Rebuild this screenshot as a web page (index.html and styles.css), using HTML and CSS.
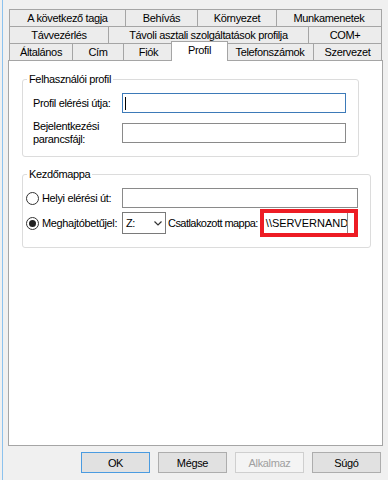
FILE: index.html
```html
<!DOCTYPE html>
<html lang="hu">
<head>
    <meta charset="UTF-8">
    <meta name="viewport" content="width=device-width, initial-scale=1.0">
    <title>Felhasználó tulajdonságai</title>
    <link rel="stylesheet" href="styles.css">
</head>
<body>
    <div class="window">
        <div class="tabs">
            <div class="tab-row row-1">
                <div class="tab">A következő tagja</div>
                <div class="tab">Behívás</div>
                <div class="tab">Környezet</div>
                <div class="tab">Munkamenetek</div>
            </div>
            <div class="tab-row row-2">
                <div class="tab">Távvezérlés</div>
                <div class="tab">Távoli asztali szolgáltatások profilja</div>
                <div class="tab">COM+</div>
            </div>
            <div class="tab-row row-3">
                <div class="tab">Általános</div>
                <div class="tab">Cím</div>
                <div class="tab">Fiók</div>
                <div class="tab active">Profil</div>
                <div class="tab">Telefonszámok</div>
                <div class="tab">Szervezet</div>
            </div>
        </div>

        <div class="page">
            <fieldset class="group">
                <legend>Felhasználói profil</legend>
                <div class="form-grid">
                    <label>Profil elérési útja:</label>
                    <div class="field focused"><span class="caret"></span></div>
                    <label>Bejelentkezési parancsfájl:</label>
                    <div class="field"></div>
                </div>
            </fieldset>

            <fieldset class="group">
                <legend>Kezdőmappa</legend>
                <div class="line">
                    <span class="option"><span class="radio"></span>Helyi elérési út:</span>
                    <div class="field wide"></div>
                </div>
                <div class="line">
                    <span class="option"><span class="radio checked"></span>Meghajtóbetűjel:</span>
                    <div class="combo">
                        <span>Z:</span>
                        <svg width="8" height="5" viewBox="0 0 8 5"><polyline points="0.5,0.5 4,4 7.5,0.5" fill="none" stroke="#333" stroke-width="1.2"/></svg>
                    </div>
                    <span class="inline-label">Csatlakozott mappa:</span>
                    <div class="marked"><div class="field path">\\SERVERNAND</div></div>
                </div>
            </fieldset>
        </div>

        <div class="buttons">
            <button class="btn default">OK</button>
            <button class="btn">Mégse</button>
            <button class="btn disabled">Alkalmaz</button>
            <button class="btn">Súgó</button>
        </div>
    </div>
</body>
</html>
```

FILE: styles.css
```css
body {
    margin: 0;
    background-color: #f0f0f0;
    font-family: "Liberation Sans", Arial, sans-serif;
    font-size: 11px;
    letter-spacing: -0.35px;
    color: #000;
}

.window {
    margin-left: 2px;
    border-left: 1px solid #8cc2ee;
    height: 480px;
    box-sizing: border-box;
    padding: 9px 5px 0 5px;
}

/* tab strip */
.tabs {
    margin: 0 1px;
}

.tab-row {
    display: grid;
    height: 17px;
}

.row-1 {
    grid-template-columns: 116px 72px 79px 1fr;
}

.row-2 {
    grid-template-columns: 99px 200px 1fr;
}

.row-3 {
    grid-template-columns: 63px 51px 50px 53px 87px 1fr;
}

.tab {
    border-top: 1px solid #a5a5a5;
    border-left: 1px solid #a5a5a5;
    background-color: #ececec;
    text-align: center;
    line-height: 16px;
    white-space: nowrap;
}

.tab:last-child {
    border-right: 1px solid #a5a5a5;
}

.tab.active {
    position: relative;
    z-index: 1;
    margin: -2px -2px -1px;
    padding-bottom: 3px;
    border-right: 1px solid #a5a5a5;
    background-color: #fff;
}

/* tab page */
.page {
    height: 386px;
    box-sizing: border-box;
    padding: 12px 23px 0 13px;
    border: 1px solid #a5a5a5;
    background-color: #fff;
}

.group {
    margin: 0 0 11px;
    padding: 7px 12px 10px 3px;
    border: 1px solid #dcdcdc;
    border-radius: 3px;
}

.group legend {
    margin-left: 1px;
    padding: 0 2px;
    line-height: 13px;
}

.form-grid {
    display: grid;
    grid-template-columns: 89px 1fr;
    row-gap: 7px;
    align-items: center;
    padding-left: 7px;
}

.form-grid label {
    line-height: 13px;
}

.field {
    height: 20px;
    box-sizing: border-box;
    border: 1px solid #8a8a8a;
    background-color: #fff;
}

.field.focused {
    border-color: #3d7ab8;
}

.caret {
    display: block;
    width: 1px;
    height: 13px;
    margin: 3px 0 0 2px;
    background-color: #000;
}

.line {
    display: flex;
    align-items: center;
}

.line + .line {
    margin-top: 1px;
}

.option {
    display: flex;
    align-items: center;
    gap: 3px;
    width: 96px;
    flex-shrink: 0;
}

.radio {
    display: flex;
    align-items: center;
    justify-content: center;
    width: 13px;
    height: 13px;
    box-sizing: border-box;
    border: 1px solid #333;
    border-radius: 50%;
    background-color: #fff;
}

.radio.checked::after {
    content: "";
    width: 7px;
    height: 7px;
    border-radius: 50%;
    background-color: #222;
}

.field.wide {
    flex: 1;
}

.combo {
    display: flex;
    align-items: center;
    justify-content: space-between;
    width: 44px;
    height: 22px;
    box-sizing: border-box;
    padding: 0 3px 0 3px;
    border: 1px solid #7a7a7a;
    background-color: #fff;
    flex-shrink: 0;
}

.inline-label {
    margin-left: 2px;
    letter-spacing: -0.55px;
    white-space: nowrap;
}

/* red highlight drawn round the folder path */
.marked {
    display: flex;
    height: 28px;
    box-sizing: border-box;
    margin-left: 2px;
    padding-right: 6px;
    border: 4px solid #ed1c24;
    background-color: #fff;
    flex-shrink: 0;
}

.field.path {
    width: 84px;
    padding-left: 2px;
    border: none;
    border-right: 1px solid #8a8a8a;
    line-height: 20px;
    letter-spacing: 0;
    white-space: nowrap;
    overflow: hidden;
}

/* dialog buttons */
.buttons {
    display: flex;
    justify-content: flex-end;
    gap: 8px;
    margin-top: 6px;
    padding-right: 2px;
}

.btn {
    width: 69px;
    height: 21px;
    padding: 0;
    border: 1px solid #adadad;
    background-color: #e1e1e1;
    font: inherit;
    letter-spacing: inherit;
    color: #000;
}

.btn.default {
    border-color: #4a9be0;
}

.btn.disabled {
    border-color: #cfcfcf;
    background-color: #f4f4f4;
    color: #a0a0a0;
}
```
